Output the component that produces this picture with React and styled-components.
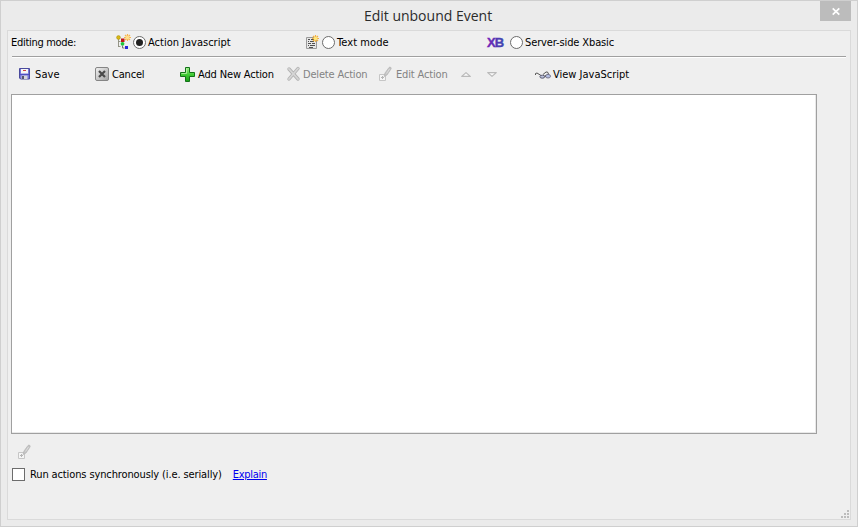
import React from 'react';
import styled, { createGlobalStyle } from 'styled-components';

const GlobalStyle = createGlobalStyle`
  * { box-sizing: border-box; }
  body { margin: 0; background: #ebebeb; }
`;

const Window = styled.div`
  width: 858px;
  height: 527px;
  display: flex;
  flex-direction: column;
  padding: 0 6px 6px;
  border: 1px solid #cfcfcf;
  background: #ebebeb;
  color: #000;
  font: 11px/14px "DejaVu Sans Condensed", "DejaVu Sans", sans-serif;
  overflow: hidden;
`;

const TitleBar = styled.header`
  display: grid;
  grid-template-columns: 1fr 31px;
  flex: none;
  height: 29px;
`;

const Title = styled.h1`
  margin: 0;
  padding: 5px 0 0 29px;
  text-align: center;
  font: 14px/20px "Open Sans", "Noto Sans", sans-serif;
  color: #2b2b2b;
`;

const CloseButton = styled.button`
  display: flex;
  align-items: center;
  justify-content: center;
  height: 20px;
  padding: 1px 0 0;
  border: 0;
  background: #bcbcbc;
`;

const Panel = styled.main`
  flex: 1;
  display: flex;
  flex-direction: column;
  border: 1px solid #dadada;
  background: #efefef;
  padding: 0 3px;
`;

const ModeRow = styled.div`
  display: grid;
  grid-template-columns: 105px 190px 181px 1fr;
  align-items: center;
  height: 22px;
`;

const Mode = styled.label`
  display: grid;
  grid-template-columns: ${(p) => p.$icon}px 15px auto;
  justify-content: start;
  align-items: center;
`;

const Text = styled.span`
  padding-top: 1px;
  white-space: nowrap;
  letter-spacing: ${(p) => p.$track || 0}px;
  color: ${(p) => (p.$muted ? '#838383' : 'inherit')};
`;

const Radio = styled.span`
  display: grid;
  place-items: center;
  width: 13px;
  height: 13px;
  border: 1px solid #6c6c6c;
  border-radius: 50%;
  background: #fff;
  &::after {
    content: '';
    width: 7px;
    height: 7px;
    border-radius: 50%;
    background: ${(p) => (p.$checked ? '#222' : 'transparent')};
  }
`;

const Divider = styled.hr`
  flex: none;
  width: 834px;
  height: 2px;
  margin: 3px 0 0 1px;
  border: 0;
  border-top: 1px solid #a0a0a0;
  background: #fff;
`;

const Toolbar = styled.div`
  display: grid;
  grid-template-columns: 76px 85px 107px 92px 82px 26px 48px auto;
  align-items: center;
  height: 32px;
  padding-left: 8px;
`;

const ToolButton = styled.button`
  display: grid;
  grid-template-columns: ${(p) => p.$icon || 16}px auto;
  justify-content: start;
  align-items: center;
  padding: 0;
  border: 0;
  background: none;
  color: inherit;
  font: inherit;
`;

const ActionList = styled.div`
  flex: none;
  width: 806px;
  height: 340px;
  margin-top: 4px;
  border: 1px solid #a0a0a0;
  box-shadow: inset -1px -1px #e9e9e9;
  background: #fff;
`;

const DetailRow = styled.div`
  display: flex;
  align-items: center;
  height: 34px;
  padding: 2px 0 0 7px;
`;

const OptionRow = styled.div`
  display: flex;
  align-items: center;
  height: 13px;
  padding-left: 1px;
`;

const CheckBox = styled.span`
  width: 13px;
  height: 13px;
  margin-right: 5px;
  border: 1px solid #6c6c6c;
  background: #fff;
`;

const Link = styled.a`
  margin-left: 11px;
  color: #0000f0;
  text-decoration: underline;
  letter-spacing: -0.3px;
`;

const GripRow = styled.div`
  display: flex;
  justify-content: flex-end;
  margin: auto -2px 1px 0;
`;

const Icon = styled.svg`
  display: block;
  overflow: visible;
`;

const XbMark = styled.text`
  font: bold 13px "Liberation Sans", sans-serif;
  letter-spacing: -1px;
  stroke-width: 0.4px;
`;

const TreeIcon = () => (
  <Icon width="16" height="16" viewBox="0 0 16 16">
    <path d="M2.500 5v8M2.500 7.500h2M2.500 12.500h2" fill="none" stroke="#8a8a7a" strokeWidth=".9" />
    <circle cx="2.500" cy="3.500" r="1.900" fill="#d8b818" stroke="#a98c0a" strokeWidth=".5" />
    <g stroke="#f8b44a" strokeWidth="1.200">
      <path d="M11.500 0v7M8 3.500h7M9 1l5 5M14 1l-5 5" />
    </g>
    <circle cx="11.500" cy="3.500" r="1.800" fill="#ffe08a" />
    <rect x="5" y="4.500" width="3.500" height="3.500" fill="#c01616" />
    <circle cx="6.500" cy="9.800" r="1.900" fill="#20c83c" />
    <path d="M6.500 11.500v2.500h2" fill="none" stroke="#777" />
    <rect x="9" y="12" width="3" height="3" fill="#2828d8" />
  </Icon>
);

const ScriptIcon = () => (
  <Icon width="16" height="16" viewBox="0 0 16 16">
    <path d="M.5 3.500h10v11H.5z" fill="#e6e6e6" stroke="#9a9a9a" />
    <path d="M2 5.500h2M5 5.500h3M2 7.500h1M4 7.500h4M2 9.500h3M6 9.500h3M2 11.500h1M4 11.500h5M3 13.500h4" stroke="#505050" />
    <path d="M9.500 1v7M6 4.500h7M7 2l5 5M12 2l-5 5" stroke="#f3b03c" strokeWidth="1.200" />
    <circle cx="9.500" cy="4.500" r="1.800" fill="#ffe77a" />
  </Icon>
);

const XbIcon = () => (
  <Icon width="17" height="14" viewBox="0 0 17 14">
    <defs>
      <linearGradient id="xb" x2="1" y2="0">
        <stop stopColor="#7420b8" />
        <stop offset="1" stopColor="#3d48b0" />
      </linearGradient>
    </defs>
    <XbMark x="0" y="11.500" fill="url(#xb)" stroke="url(#xb)">XB</XbMark>
  </Icon>
);

const SaveIcon = () => (
  <Icon width="11" height="12" viewBox="0 0 11 12">
    <path d="M.5.5h10v10.500H1.500l-1-1z" fill="#7474dc" stroke="#4a4a9c" />
    <path d="M2 1h7v4.500H2z" fill="#f6f6f6" />
    <path d="M4 2.500h3" stroke="#d04040" />
    <path d="M1 6.500h9" stroke="#4f4fc0" />
    <path d="M2.500 7.500h6V11h-6z" fill="#d5d5dc" />
    <path d="M3 8h2v3H3z" fill="#55556c" />
  </Icon>
);

const CancelIcon = () => (
  <Icon width="14" height="14" viewBox="0 0 14 14">
    <defs>
      <linearGradient id="key" x2="1" y2="1">
        <stop stopColor="#f2f2f2" />
        <stop offset="1" stopColor="#a2a2a2" />
      </linearGradient>
    </defs>
    <rect x=".5" y=".5" width="13" height="13" rx="1.500" fill="url(#key)" stroke="#858585" />
    <path d="M4 4l6 6M10 4l-6 6" stroke="#4a4a4a" strokeWidth="2.200" />
  </Icon>
);

const PlusIcon = () => (
  <Icon width="15" height="15" viewBox="0 0 15 15">
    <defs>
      <linearGradient id="green" x2="0" y2="1">
        <stop stopColor="#a5f08f" />
        <stop offset=".5" stopColor="#42cc36" />
        <stop offset="1" stopColor="#169c16" />
      </linearGradient>
    </defs>
    <path d="M5.500.5h4v5h5v4h-5v5h-4v-5h-5v-4h5z" fill="url(#green)" stroke="#127318" strokeLinejoin="round" />
    <path d="M6.500 1.500v5h-5" fill="none" stroke="#c9f7bb" opacity=".7" />
  </Icon>
);

const DeleteIcon = () => (
  <Icon width="13" height="14" viewBox="0 0 13 14">
    <path d="M2 2l9 10M11 1.500L2 12" stroke="#b2b2b2" strokeWidth="3.400" strokeLinecap="round" />
    <path d="M2 2l9 10M11 1.500L2 12" stroke="#d6d6d6" strokeWidth="1.800" strokeLinecap="round" />
  </Icon>
);

const PencilIcon = () => (
  <Icon width="13" height="16" viewBox="0 0 13 16">
    <path d="M.5 8.500h6v6h-6z" fill="#f5f5f5" stroke="#c6c6c6" />
    <path d="M3.500 10v3M2 11.500h3" stroke="#b5b5b5" />
    <path d="M5 10.500l1-3.500 4-5.500c1-1 2.800 0 2 1.500L8 9z" fill="#c4c4c4" stroke="#b4b4b4" strokeWidth=".7" />
    <path d="M7.500 7.500l3-4.500" stroke="#dcdcdc" />
  </Icon>
);

const ArrowIcon = ({ down }) => (
  <Icon width="10" height="5" viewBox="0 0 10 5">
    <path
      d={down ? 'M.7.600h8.600L5 4.400z' : 'M.7 4.400h8.600L5 .600z'}
      fill="#f8f8f8"
      stroke="#bababa"
      strokeWidth="1.200"
      strokeLinejoin="round"
    />
  </Icon>
);

const GlassesIcon = () => (
  <Icon width="16" height="9" viewBox="0 0 16 9">
    <path d="M.5 5V3.500l1.500-.5 4 2.500M8 4.500l3-2.500 1.500 0 1 2" fill="none" stroke="#555" />
    <ellipse cx="7.300" cy="6.700" rx="2.400" ry="1.500" fill="#b9c0dc" stroke="#5c5c70" />
    <ellipse cx="13" cy="6.200" rx="2.500" ry="1.800" fill="#b4bee4" stroke="#77778c" />
    <path d="M9.500 6h1.500" stroke="#444" />
  </Icon>
);

const CloseIcon = () => (
  <Icon width="8" height="7" viewBox="0 0 8 7">
    <path d="M.7.300l6.600 6.400M7.300.300L.7 6.700" stroke="#fff" strokeWidth="1.700" />
  </Icon>
);

const GripIcon = () => (
  <Icon width="8" height="8" viewBox="0 0 8 8">
    <path d="M6 0h2v2H6zM3 3h2v2H3zM6 3h2v2H6zM0 6h2v2H0zM3 6h2v2H3zM6 6h2v2H6z" fill="#bcbcbc" />
  </Icon>
);

const modes = [
  { label: 'Action Javascript', icon: <TreeIcon />, size: 17, track: 0, checked: true },
  { label: 'Text mode', icon: <ScriptIcon />, size: 16, track: 0.08 },
  { label: 'Server-side Xbasic', icon: <XbIcon />, size: 23, track: -0.12 },
];

const tools = [
  { label: 'Save', icon: <SaveIcon />, size: 16, track: 0.1 },
  { label: 'Cancel', icon: <CancelIcon />, size: 17, track: -0.2 },
  { label: 'Add New Action', icon: <PlusIcon />, size: 18, track: -0.15 },
  { label: 'Delete Action', icon: <DeleteIcon />, size: 16, track: -0.17, muted: true },
  { label: 'Edit Action', icon: <PencilIcon />, size: 17, track: -0.16, muted: true },
  { icon: <ArrowIcon />, size: 10 },
  { icon: <ArrowIcon down />, size: 10 },
  { label: 'View JavaScript', icon: <GlassesIcon />, size: 18, track: 0 },
];

export default function App() {
  return (
    <>
      <GlobalStyle />
      <Window>
        <TitleBar>
          <Title>Edit unbound Event</Title>
          <CloseButton aria-label="Close"><CloseIcon /></CloseButton>
        </TitleBar>
        <Panel>
          <ModeRow>
            <Text $track={-0.3}>Editing mode:</Text>
            {modes.map((m) => (
              <Mode key={m.label} $icon={m.size}>
                {m.icon}
                <Radio $checked={m.checked} />
                <Text $track={m.track}>{m.label}</Text>
              </Mode>
            ))}
          </ModeRow>
          <Divider />
          <Toolbar>
            {tools.map((t, i) => (
              <ToolButton key={i} $icon={t.size}>
                {t.icon}
                {t.label && <Text $track={t.track} $muted={t.muted}>{t.label}</Text>}
              </ToolButton>
            ))}
          </Toolbar>
          <ActionList />
          <DetailRow><PencilIcon /></DetailRow>
          <OptionRow>
            <CheckBox />
            <Text $track={-0.12}>Run actions synchronously (i.e. serially)</Text>
            <Link>Explain</Link>
          </OptionRow>
          <GripRow><GripIcon /></GripRow>
        </Panel>
      </Window>
    </>
  );
}
